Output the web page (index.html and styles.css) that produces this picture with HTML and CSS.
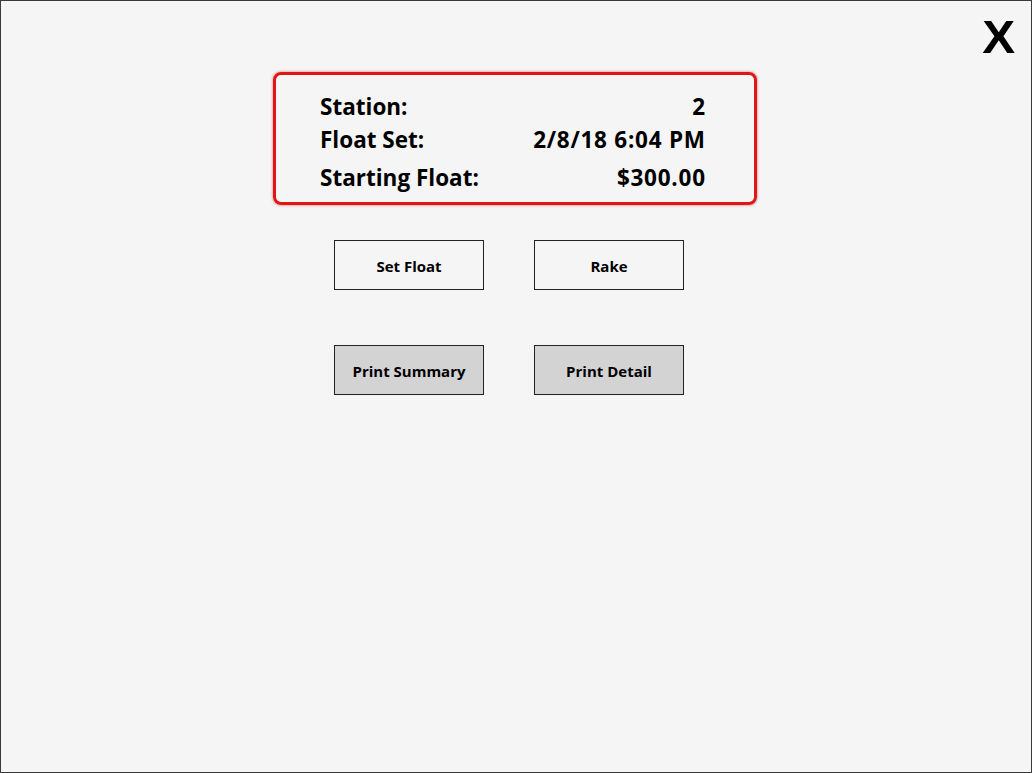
FILE: index.html
```html
<!DOCTYPE html>
<html>
<head>
<meta charset="utf-8">
<link rel="stylesheet" href="styles.css">
</head>
<body>
<div class="page">
  <div class="topbar"><span class="close">X</span></div>
  <div class="info">
    <div class="row r1"><span>Station:</span><span class="val">2</span></div>
    <div class="row r2"><span>Float Set:</span><span class="val">2/8/18 6:04 PM</span></div>
    <div class="row r3"><span>Starting Float:</span><span class="val">$300.00</span></div>
  </div>
  <div class="buttons">
    <div class="btn">Set Float</div>
    <div class="btn">Rake</div>
    <div class="btn gray">Print Summary</div>
    <div class="btn gray">Print Detail</div>
  </div>
</div>
</body>
</html>
```
FILE: styles.css
```css
html, body {
  margin: 0;
  padding: 0;
  background: #f5f5f5;
}
.page {
  width: 1032px;
  height: 773px;
  box-sizing: border-box;
  border: 1px solid #3a3a3a;
  background: #f5f5f5;
  font-family: "Open Sans", "Noto Sans", sans-serif;
  color: #000;
  display: flex;
  flex-direction: column;
}
.topbar {
  height: 71px;
  display: flex;
  justify-content: flex-end;
  align-items: flex-start;
}
.close {
  font-family: "Liberation Sans", Arial, sans-serif;
  font-weight: 700;
  font-size: 47px;
  line-height: 47px;
  margin-top: 12px;
  margin-right: 17px;
  transform: scaleX(1.05);
}
.info {
  margin-left: 272px;
  width: 484px;
  height: 133px;
  box-sizing: border-box;
  border: 3px solid #e01616;
  border-radius: 8px;
  box-shadow: 0 0 3px rgba(190, 0, 0, 0.55);
  padding: 15px 49px 0 44px;
  font-weight: 700;
  font-size: 22.5px;
}
.row {
  display: flex;
  justify-content: space-between;
}
.val {
  letter-spacing: 0.75px;
  margin-right: -0.75px;
}
.r1 { height: 33px; line-height: 33px; }
.r2 { height: 35px; line-height: 33px; }
.r3 { height: 40px; line-height: 40px; }
.buttons {
  margin-top: 35px;
  margin-left: 333px;
  display: grid;
  grid-template-columns: 150px 150px;
  column-gap: 50px;
  row-gap: 55px;
}
.btn {
  height: 50px;
  box-sizing: border-box;
  border: 1px solid #222;
  background: #f5f5f5;
  display: flex;
  align-items: center;
  justify-content: center;
  padding-top: 2px;
  font-weight: 700;
  font-size: 15px;
}
.btn.gray {
  background: #d3d3d3;
}
```
